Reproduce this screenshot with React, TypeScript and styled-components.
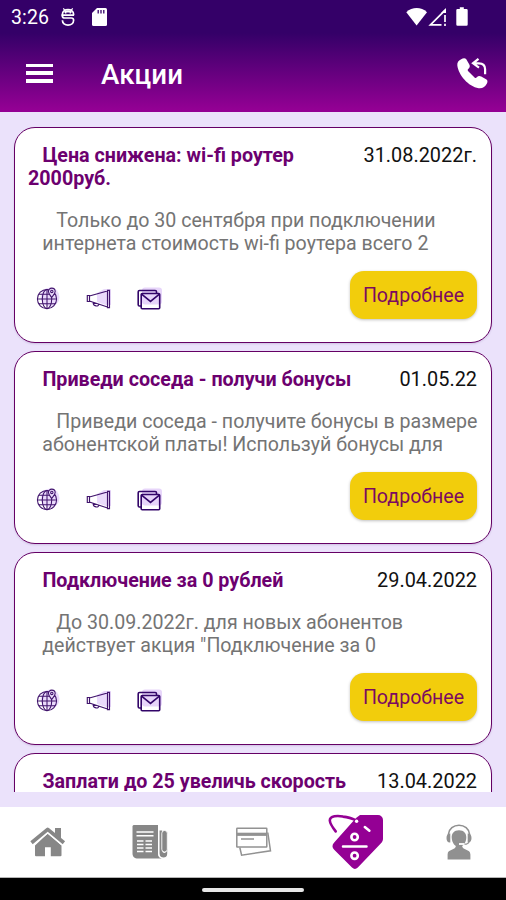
import React from "react";
import styled, { createGlobalStyle } from "styled-components";

const GlobalStyle = createGlobalStyle`
  * { box-sizing: border-box; }
  body { margin: 0; background: #ebe2fb; font-family: Roboto, "Liberation Sans", sans-serif; }
  svg { display: block; overflow: visible; }
`;

const Screen = styled.div`
  width: 506px;
  height: 900px;
  display: flex;
  flex-direction: column;
  overflow: hidden;
  background: #ebe2fb;
`;

const Header = styled.header`
  height: 112px;
  flex: none;
  background: linear-gradient(#340068 0, #340068 33px, #940094 110px);
  color: #fff;
`;

const StatusBar = styled.div`
  height: 36px;
  display: flex;
  align-items: flex-start;
  padding: 8px 38px 0 11px;
`;

const Clock = styled.span`
  width: 50px;
  font-size: 19.5px;
  line-height: 20px;
  letter-spacing: 0.1px;
  white-space: nowrap;
`;

const StatusRight = styled.div`
  display: flex;
  margin-left: auto;
`;

const AppBar = styled.div`
  height: 76px;
  display: flex;
  align-items: center;
  padding: 0 18px 2px 26px;
`;

const MenuButton = styled.button`
  width: 27px;
  height: 19px;
  padding: 0;
  border: 0;
  background: none;
  display: flex;
  flex-direction: column;
  justify-content: space-between;
`;

const MenuLine = styled.span`
  width: 27px;
  height: 3.5px;
  background: #fff;
`;

const PageTitle = styled.h1`
  margin: 3px auto 0 48px;
  font-size: 27.7px;
  line-height: 32px;
  font-weight: 500;
  letter-spacing: 0.1px;
`;

const List = styled.main`
  height: 680px;
  margin-bottom: 15px;
  flex: none;
  overflow: hidden;
  padding: 15px 14px 0;
  display: flex;
  flex-direction: column;
  gap: 8px;
`;

const Card = styled.article<{ $tall?: boolean }>`
  height: ${(p) => (p.$tall ? 216 : 193)}px;
  flex: none;
  padding: 16px 14px 0 13px;
  background: #fff;
  border: 1.4px solid #650065;
  border-radius: 21px;
  box-shadow: 0 1px 2px rgba(90, 50, 120, 0.18);
`;

const CardHead = styled.div`
  display: flex;
  justify-content: space-between;
  font-size: 20px;
  line-height: 23px;
  white-space: nowrap;
`;

const CardTitle = styled.h2`
  margin: 0;
  text-indent: 14.4px;
  font-size: 19.7px;
  line-height: 23px;
  font-weight: 700;
  color: #6c006f;
  white-space: pre;
`;

const CardDate = styled.time`
  font-size: 19.9px;
  color: #111;
`;

const CardText = styled.p`
  margin: 19px 0 16px 14.3px;
  text-indent: 14px;
  font-size: 19.6px;
  line-height: 23px;
  color: #747474;
  white-space: pre;
`;

const CardFoot = styled.div`
  display: flex;
  align-items: flex-start;
  justify-content: space-between;
`;

const IconRow = styled.div`
  display: flex;
  padding: 14.5px 0 0 8px;
  gap: 25.5px;
`;

const MoreButton = styled.button`
  width: 127px;
  height: 48px;
  padding: 2px 0 0;
  border: 0;
  border-radius: 14px;
  background: #f2cd0c;
  box-shadow: 0 1px 3px rgba(0, 0, 0, 0.25);
  font: 400 19.6px/24px Roboto, sans-serif;
  color: #7b0b60;
`;

const NavBar = styled.nav`
  height: 71px;
  flex: none;
  display: grid;
  grid-template-columns: 95px 110px 97px 108px 98px;
  background: #fff;
  border-bottom: 1px solid #b5b5b5;
`;

const NavItem = styled.button`
  padding: 0;
  border: 0;
  background: none;
  display: flex;
  align-items: center;
  justify-content: center;
`;

const GestureBar = styled.footer`
  flex: 1;
  background: #000;
  display: flex;
  justify-content: center;
  padding-top: 10px;
`;

const Handle = styled.div`
  width: 102px;
  height: 4px;
  border-radius: 2px;
  background: #e6e6e6;
`;

const DebugIcon = () => (
  <svg width="14" height="18" viewBox="0 0 14 18" fill="none" stroke="#fff" strokeWidth="1.7">
    <path d="M2.300.3l1.400 1.900M11.700.3l-1.400 1.900" strokeWidth="1.200" />
    <path d="M1.400 8.200V6.500c0-3 2.500-4.800 5.600-4.800s5.600 1.800 5.600 4.800v.7" />
    <path fill="#fff" stroke="none" d="M2.500 4.500C4 1.500 10 1.500 11.500 4.500z" />
    <path d="M4.700 4v1.500M9.300 4v1.500" strokeWidth="1.400" />
    <path d="M13 7.200H1.400v.7c0 1.500.9 2.100 2.400 2.100h6.400c1.600 0 2.400.8 2.400 2.300 0 3-2.500 4.800-5.600 4.800s-5.600-1.800-5.600-4.800" />
  </svg>
);

const SdIcon = () => (
  <svg width="15" height="18" viewBox="0 0 15 18">
    <path fill="#fff" d="M5 0h8.500A1.500 1.500 0 0 1 15 1.500v15a1.500 1.500 0 0 1-1.500 1.500h-12A1.500 1.500 0 0 1 0 16.500V5z" />
    <path stroke="#340068" strokeWidth="1.300" d="M6.200 2v3.500M9 2v3.500M11.800 2v3.500" />
  </svg>
);

const WifiIcon = () => (
  <svg width="22" height="18" viewBox="0 0 22 18">
    <path fill="#fff" d="M0.300 4.200C6.200-1.300 15.200-1.300 21 4.200L10.600 17.600z" />
  </svg>
);

const SignalIcon = () => (
  <svg width="18" height="18" viewBox="0 0 18 18" fill="none" stroke="#fff" strokeWidth="1.700">
    <path d="M13.500 16.800H2.400L17.200 2.200" />
    <path fill="#fff" stroke="none" d="M13 5L18 0v5z" />
    <path d="M17 7v7M17 15.800v2.200" />
  </svg>
);

const BatteryIcon = () => (
  <svg width="12" height="19" viewBox="0 0 12 19" fill="#fff">
    <path d="M3.800-.7h4v1.800H10.500A1.200 1.200 0 0 1 11.700 2.300v14.300a1.200 1.200 0 0 1-1.200 1.200h-9A1.200 1.200 0 0 1 .3 16.600V2.300a1.200 1.200 0 0 1 1.200-1.200h2.300z" />
  </svg>
);

const CallIcon = () => (
  <svg width="31" height="31" viewBox="0 0 31 31">
    <path
      fill="#fff"
      d="M4.200 1.200C6 .1 8.200-.2 9.300 1.300l3 5.200c.8 1.500.6 3-.8 4.200-.9.700-1 1.300-.5 2.200l6.800 6.900c.8.500 1.300.400 2-.5 1.300-1.500 2.700-1.800 4.400-.8l4.900 2.800c1.600 1 1.700 2.500.8 4.200-1.600 3.100-4.400 5.300-8.200 4.800C11.500 28.500 1.500 17.300.3 7.300c-.3-2.900 1.500-5 3.900-6.100z"
    />
    <path fill="none" stroke="#fff" strokeWidth="2.200" d="M21.500.8L16 5.300l6 4.400M16.500 5.300h5.300c4.500 0 6.300 2.400 6.300 6v5" />
  </svg>
);

const GlobeIcon = () => (
  <svg width="24" height="24" viewBox="0 0 24 24" fill="none" stroke="#41146d" strokeWidth="1.050">
    <circle cx="14" cy="11" r="9.500" fill="#eadafb" stroke="none" />
    <circle cx="11" cy="13" r="9.600" />
    <ellipse cx="11" cy="13" rx="4.700" ry="9.600" />
    <path d="M11 3.400v19.200M1.400 13h19.200M2.700 8.200h16.600M2.700 17.800h16.600" />
    <path fill="#eadafb" d="M15.700 11.500c-2-2.800-3.300-4.300-3.300-6a3.400 3.400 0 0 1 6.800 0c0 1.700-1.500 3.300-3.500 6z" />
    <circle cx="15.800" cy="5.400" r="1.200" />
  </svg>
);

const MegaphoneIcon = () => (
  <svg width="26" height="24" viewBox="0 0 26 24" fill="none" stroke="#41146d" strokeWidth="1.150">
    <path d="M11 7l7-4h7v16h-5l-9-3z" fill="#eadafb" stroke="none" />
    <path d="M3.400 10L21.500 5v16L3.400 15M21.500 4.300h2v17.300h-2zM1.300 9.500h2.200v6H1.300zM7.200 16.500c-.2 4 5.600 4.600 5.600 1.500" />
  </svg>
);

const MailIcon = () => (
  <svg width="26" height="24" viewBox="0 0 26 24" fill="none" stroke="#320568" strokeWidth="1.600">
    <rect x="5" y="1.500" width="20" height="17" rx="3" fill="#e7d5fa" stroke="none" />
    <path d="M4.200 20H2.500a1.300 1.300 0 0 1-1.300-1.300V5.800a1.300 1.300 0 0 1 1.300-1.300h15.700a1.300 1.300 0 0 1 1.300 1.300v1.300" />
    <rect x="4.200" y="7.500" width="18.500" height="15.300" rx="1" />
    <path d="M4.600 8.200l8.900 7.200 8.900-7.200" />
  </svg>
);

const HomeIcon = () => (
  <svg width="36" height="30" viewBox="0 0 36 30" fill="#878787">
    <path d="M17.700 6.500L31.500 18.500V28.200a1 1 0 0 1-1 1H20.800V20.300H15v8.900H6a1 1 0 0 1-1-1V18.500z" />
    <path fill="none" stroke="#fff" strokeWidth="7" d="M1.600 15.500L17.700 2.400l16 13.100" />
    <path fill="none" stroke="#878787" strokeWidth="3.700" strokeLinejoin="round" d="M1.500 15.700L17.700 2.400l16.200 13.300" />
    <path d="M25 1h6v11l-6-5z" />
  </svg>
);

const NewsIcon = () => (
  <svg width="36" height="34" viewBox="0 0 36 34">
    <path fill="#878787" d="M1.500 0H26v29c0 2.500 1.500 4 4 4.500H6C2.500 33.500.5 31.500.5 28.500V1z" />
    <path fill="#878787" stroke="#fff" strokeWidth="1.100" d="M27 5h3.800v20.500c0 2.500 3 2.500 3 0V7c1.500-1.600 2-.5 2 1v20.500c0 3-1.700 4.600-4.200 4.600-2.900 0-4.600-2-4.600-4.600z" />
    <rect x="29.800" y="5.500" width="5.500" height="21.500" rx="2.700" fill="#878787" stroke="#fff" strokeWidth=".9" />
    <path fill="none" stroke="#fff" strokeWidth="1.500" d="M4.500 7h17M4.500 10.800h17M5 16h6.500M13.500 16H20M5 19.500h6.500M13.500 19.500H20M5 23h6.500M13.500 23H20M5 26.500h6.500M13.500 26.500H20" />
  </svg>
);

const CardsIcon = () => (
  <svg width="36" height="30" viewBox="0 0 36 30" fill="none" stroke="#929292" strokeWidth="1.500">
    <path d="M3.800 20.500l1.800 7.700L34.500 23.800 31.800 5.500" />
    <rect x=".8" y="1.300" width="30" height="18.800" rx=".5" fill="#fff" />
    <path strokeWidth="3.200" d="M1 7.300h30" />
    <path d="M5 12h13" />
  </svg>
);

const TagIcon = () => (
  <svg width="56" height="54" viewBox="0 0 56 54">
    <path fill="#940094" d="M32 0h18a5 5 0 0 1 5 5v18.500c0 2-.6 3.300-2 4.700L29.800 52.600c-1.900 1.900-3.900 1.900-5.800 0L6.200 34.800c-2.300-2.300-2.300-5 0-7.300L28 3z" />
    <path fill="none" stroke="#fff" strokeWidth="2.500" strokeLinecap="round" d="M36.800 12l4.600 3.800M15 31.500h23.500" />
    <circle cx="26.600" cy="22" r="3.200" fill="none" stroke="#fff" strokeWidth="2.600" />
    <circle cx="26.600" cy="40.700" r="3.200" fill="none" stroke="#fff" strokeWidth="2.600" />
    <path fill="none" stroke="#940094" strokeWidth="2.600" strokeLinecap="round" d="M7.700 16.400C4.800 12.700 2 8.200 1.800 5.500c0-4.800 8-5 13.200-3.900 5 .7 9 1.800 11.500 3" />
    <circle cx="28.600" cy="6.200" r="1.700" fill="#fff" />
  </svg>
);

const SupportIcon = () => (
  <svg width="26" height="36" viewBox="0 0 26 36">
    <path fill="none" stroke="#909090" strokeWidth="1.600" d="M2.500 12V10C3 4.800 7.500 1.200 13 1.200S23 4.800 23.500 10v2" />
    <path fill="#909090" d="M4.300 9.500v9C1.500 18.700.5 16.500.5 14S1.500 9.500 4.300 9.500zM21.700 9.500v9c2.800.2 3.800-2 3.800-4.500s-1-4.500-3.800-4.500z" />
    <path fill="#909090" d="M13 6.300c5 0 7.500 3.300 7.300 7.500-.3 5.500-3.600 9.200-7.300 9.200s-7-3.700-7.300-9.200C5.500 9.600 8 6.300 13 6.300zM10 21h6c0 6 8.400 3.500 8.400 9.500v5H1.600v-5C1.600 24.500 10 27 10 21z" />
    <path fill="none" stroke="#fff" strokeWidth="1.800" d="M13 20h5.500" />
    <path fill="none" stroke="#909090" strokeWidth="1.100" d="M23 17.800c-.5 1.800-2 2.400-4.500 2.400" />
  </svg>
);

type Promo = { title: string; date: string; text: string; tall?: boolean };

const promos: Promo[] = [
  {
    title: "Цена снижена: wi-fi роутер\n2000руб.",
    date: "31.08.2022г.",
    text: "Только до 30 сентября при подключении\nинтернета стоимость wi-fi роутера всего 2",
    tall: true,
  },
  {
    title: "Приведи соседа - получи бонусы",
    date: "01.05.22",
    text: "Приведи соседа - получите бонусы в размере\nабонентской платы! Используй бонусы для",
  },
  {
    title: "Подключение за 0 рублей",
    date: "29.04.2022",
    text: "До 30.09.2022г. для новых абонентов\nдействует акция \"Подключение за 0",
  },
  { title: "Заплати до 25 увеличь скорость", date: "13.04.2022", text: "" },
];

const PromoCard = ({ promo }: { promo: Promo }) => (
  <Card $tall={promo.tall}>
    <CardHead>
      <CardTitle>{promo.title}</CardTitle>
      <CardDate>{promo.date}</CardDate>
    </CardHead>
    {promo.text && (
      <>
        <CardText>{promo.text}</CardText>
        <CardFoot>
          <IconRow>
            <GlobeIcon />
            <MegaphoneIcon />
            <MailIcon />
          </IconRow>
          <MoreButton>Подробнее</MoreButton>
        </CardFoot>
      </>
    )}
  </Card>
);

const StatusGlyph = styled.span<{ $before: number }>`
  margin-left: ${(p) => p.$before}px;
`;

export default function App() {
  return (
    <Screen>
      <GlobalStyle />
      <Header>
        <StatusBar>
          <Clock>3:26</Clock>
          <StatusGlyph $before={0}><DebugIcon /></StatusGlyph>
          <StatusGlyph $before={16.5}><SdIcon /></StatusGlyph>
          <StatusRight>
            <StatusGlyph $before={0}><WifiIcon /></StatusGlyph>
            <StatusGlyph $before={0}><SignalIcon /></StatusGlyph>
            <StatusGlyph $before={10}><BatteryIcon /></StatusGlyph>
          </StatusRight>
        </StatusBar>
        <AppBar>
          <MenuButton aria-label="Меню">
            <MenuLine />
            <MenuLine />
            <MenuLine />
          </MenuButton>
          <PageTitle>Акции</PageTitle>
          <CallIcon />
        </AppBar>
      </Header>
      <List>
        {promos.map((promo) => (
          <PromoCard key={promo.title} promo={promo} />
        ))}
      </List>
      <NavBar>
        <NavItem><HomeIcon /></NavItem>
        <NavItem><NewsIcon /></NavItem>
        <NavItem><CardsIcon /></NavItem>
        <NavItem><TagIcon /></NavItem>
        <NavItem><SupportIcon /></NavItem>
      </NavBar>
      <GestureBar>
        <Handle />
      </GestureBar>
    </Screen>
  );
}
